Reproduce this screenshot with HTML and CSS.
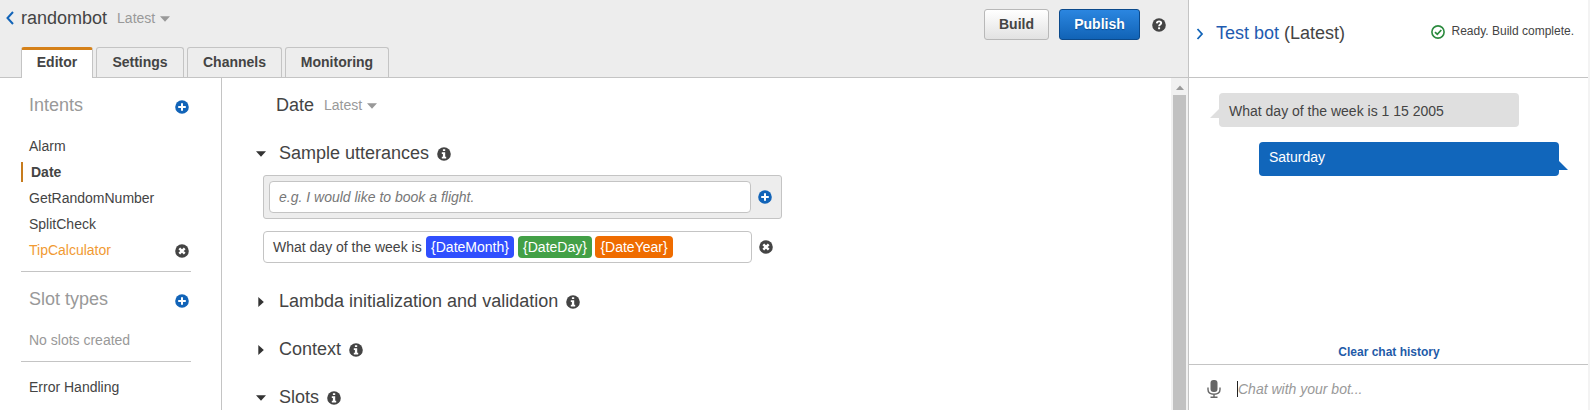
FILE: index.html
```html
<!DOCTYPE html>
<html lang="en">
<head>
<meta charset="utf-8">
<title>randombot</title>
<link rel="stylesheet" href="styles.css">
</head>
<body>
<svg class="defs" aria-hidden="true">
  <symbol id="plus" viewBox="0 0 14 14"><circle cx="7" cy="7" r="6.8" fill="#1264b8"/><path d="M7 3.2v7.6M3.2 7h7.6" stroke="#fff" stroke-width="2"/></symbol>
  <symbol id="remove" viewBox="0 0 14 14"><circle cx="7" cy="7" r="6.8" fill="#444"/><path d="M4.3 4.3l5.4 5.400M9.700 4.300l-5.400 5.400" stroke="#fff" stroke-width="2.400"/></symbol>
  <symbol id="info" viewBox="0 0 14 14"><circle cx="7" cy="7" r="6.8" fill="#444"/><path d="M5.9 2.2h2.3v1.9H5.9zM4.8 5.3h3.4v4.5h1v1.6H4.8V9.8h1.1V6.9H4.8z" fill="#fff"/></symbol>
  <symbol id="help" viewBox="0 0 14 14"><circle cx="7" cy="7" r="6.8" fill="#444"/><path d="M4.8 5.3C5 3.9 5.900 3.400 7.100 3.400c1.300 0 2.100.7 2.100 1.700 0 1.500-2.100 1.500-2.100 3.100" fill="none" stroke="#fff" stroke-width="1.900"/><path d="M6.100 9.300h2v1.900h-2z" fill="#fff"/></symbol>
  <symbol id="down" viewBox="0 0 10 6"><path d="M0 .3h10L5 5.800z" fill="currentColor"/></symbol>
  <symbol id="right" viewBox="0 0 6 10"><path d="M.3 0v10L5.800 5z" fill="currentColor"/></symbol>
</svg>
<div class="app">
  <main class="editor">
    <header class="top">
      <div class="bar">
        <div class="botname">
          <svg class="back" viewBox="0 0 8 14"><path d="M7 1L1.500 7 7 13" fill="none" stroke="#1264b8" stroke-width="2"/></svg>
          <h1 class="title">randombot</h1>
          <span class="version">Latest</span>
          <svg class="caret"><use href="#down"/></svg>
        </div>
        <div class="actions">
          <button class="btn build">Build</button>
          <button class="btn publish">Publish</button>
          <svg class="icon"><use href="#help"/></svg>
        </div>
      </div>
      <nav class="tabs">
        <a class="tab active">Editor</a>
        <a class="tab settings">Settings</a>
        <a class="tab channels">Channels</a>
        <a class="tab monitoring">Monitoring</a>
      </nav>
    </header>
    <div class="workspace">
      <aside class="sidebar">
        <section class="group intents">
          <div class="grouphead"><h2 class="title">Intents</h2><svg class="icon"><use href="#plus"/></svg></div>
          <ul class="list">
            <li class="item">Alarm</li>
            <li class="item selected">Date</li>
            <li class="item">GetRandomNumber</li>
            <li class="item">SplitCheck</li>
            <li class="item changed"><span>TipCalculator</span><svg class="icon"><use href="#remove"/></svg></li>
          </ul>
        </section>
        <section class="group slottypes">
          <div class="grouphead"><h2 class="title">Slot types</h2><svg class="icon"><use href="#plus"/></svg></div>
          <p class="empty">No slots created</p>
        </section>
        <div class="errors">Error Handling</div>
      </aside>
      <section class="content">
        <div class="intentname">
          <h2 class="title">Date</h2><span class="version">Latest</span><svg class="caret"><use href="#down"/></svg>
        </div>
        <div class="section"><svg class="arrow open"><use href="#down"/></svg><h3 class="title">Sample utterances</h3><svg class="icon"><use href="#info"/></svg></div>
        <div class="utterances">
          <div class="newutterance"><div class="field hint">e.g. I would like to book a flight.</div><svg class="icon"><use href="#plus"/></svg></div>
          <div class="utterance">
            <div class="field"><span class="words">What day of the week is</span><span class="slot month">{DateMonth}</span><span class="slot day">{DateDay}</span><span class="slot year">{DateYear}</span></div>
            <svg class="icon"><use href="#remove"/></svg>
          </div>
        </div>
        <div class="section"><svg class="arrow closed"><use href="#right"/></svg><h3 class="title">Lambda initialization and validation</h3><svg class="icon"><use href="#info"/></svg></div>
        <div class="section"><svg class="arrow closed"><use href="#right"/></svg><h3 class="title">Context</h3><svg class="icon"><use href="#info"/></svg></div>
        <div class="section"><svg class="arrow open"><use href="#down"/></svg><h3 class="title">Slots</h3><svg class="icon"><use href="#info"/></svg></div>
      </section>
      <div class="scrollbar"><svg class="up" viewBox="0 0 8 5"><path d="M0 5h8L4 .5z" fill="#999"/></svg><div class="thumb"></div></div>
    </div>
  </main>
  <aside class="test">
    <header class="testhead">
      <svg class="expand" viewBox="0 0 8 12"><path d="M1.500 1L6 6l-4.500 5" fill="none" stroke="#1264b8" stroke-width="1.800"/></svg>
      <h2 class="title"><span class="link">Test bot</span> (Latest)</h2>
      <div class="status"><svg class="icon" viewBox="0 0 14 14"><circle cx="7" cy="7" r="6.100" fill="none" stroke="#2b8a3e" stroke-width="1.600"/><path d="M4 7.200l2.300 2.200L10.300 5" fill="none" stroke="#2b8a3e" stroke-width="1.700"/></svg>Ready. Build complete.</div>
    </header>
    <div class="chat">
      <div class="bubble user">What day of the week is 1 15 2005</div>
      <div class="bubble bot">Saturday</div>
      <a class="clear">Clear chat history</a>
    </div>
    <div class="compose">
      <svg class="mic" viewBox="0 0 14 18"><rect x="3.500" y="0" width="7" height="12" rx="3" fill="#666"/><path d="M1 7.500v2c0 3 2 4.700 6 4.700s6-1.700 6-4.700v-2M7 14v3M3.500 17.200h7" fill="none" stroke="#666" stroke-width="1.400"/></svg>
      <div class="message">Chat with your bot...</div>
    </div>
  </aside>
</div>
</body>
</html>
```
FILE: styles.css
```css
* { box-sizing: border-box; }
body { margin: 0; font: 14px/20px "Liberation Sans", Arial, sans-serif; color: #444; background: #f3f3f3; }
h1, h2, h3, p, ul { margin: 0; padding: 0; font-weight: normal; }
.defs { position: absolute; width: 0; height: 0; }
.app { display: flex; width: 1588px; height: 410px; overflow: hidden; background: #fff; }
.title { font-size: 18px; line-height: 24px; white-space: nowrap; }
.icon { width: 14px; height: 14px; flex: none; }
.version { color: #999; white-space: nowrap; }
.caret { width: 10px; height: 6px; color: #999; }

.editor { width: 1188px; display: flex; flex-direction: column; flex: none; }
.top { height: 78px; background: #ededed; border-bottom: 1px solid #c4c4c4; display: flex; flex-direction: column; flex: none; }
.bar { height: 47px; display: flex; justify-content: space-between; align-items: flex-start; flex: none; }
.botname { display: flex; align-items: center; padding: 6px 0 0 6px; }
.botname .title { margin: 0 10px 0 7px; }
.back { width: 8px; height: 14px; }
.botname .caret, .intentname .caret { margin: 2px 0 0 5px; }
.actions { display: flex; align-items: center; padding: 9px 22px 0 0; }
.btn { height: 31px; padding: 0; border-radius: 3px; font: bold 14px/28px "Liberation Sans", Arial, sans-serif; }
.actions .icon { margin: 1px 0 0 12px; }
.build { width: 65px; margin-right: 10px; color: #444; background: linear-gradient(#fff, #e2e2e2); border: 1px solid #b8b8b8; }
.publish { width: 81px; color: #fff; background: linear-gradient(#2b86e0, #1163b6); border: 1px solid #0b4a8c; text-shadow: 0 1px 1px #0b4a8c; }
.btn { padding-bottom: 2px; }
.tabs { display: flex; gap: 3px; padding-left: 21px; height: 31px; }
.tab { height: 30px; border: 1px solid #c4c4c4; border-bottom: 0; border-radius: 3px 3px 0 0; font-weight: bold; line-height: 28px; text-align: center; }
.active { width: 72px; height: 31px; background: #fff; border-top: 3px solid #d5811a; line-height: 24px; }
.settings { width: 88px; }
.channels { width: 95px; }
.monitoring { width: 104px; }

.workspace { display: flex; flex: 1; min-height: 0; overflow: hidden; }
.sidebar { width: 222px; flex: none; padding: 15px 30px 0 21px; border-right: 1px solid #c4c4c4; }
.group { border-bottom: 1px solid #c4c4c4; }
.grouphead { display: flex; justify-content: space-between; align-items: center; height: 24px; padding: 0 2px 0 8px; color: #999; }
.grouphead .icon { margin-top: 4px; }
.list { list-style: none; padding-top: 16px; }
.item { display: flex; align-items: center; justify-content: space-between; height: 26px; padding: 0 2px 0 8px; }
.item .icon { margin-top: 2px; }
.selected { height: 20px; margin: 3px 0; border-left: 2px solid #c77c1e; font-weight: bold; }
.changed { color: #f19a33; }
.intents { height: 179px; }
.slottypes { height: 90px; padding-top: 15px; }
.empty { padding: 19px 0 0 8px; color: #999; }
.errors { padding: 15px 0 0 8px; }

.content { flex: 1; padding: 15px 0 0 34px; }
.intentname { display: flex; align-items: center; height: 24px; padding-left: 20px; }
.intentname .title { margin-right: 10px; }
.section { display: flex; align-items: center; height: 24px; margin-top: 24px; }
.section .icon { margin: 2px 0 0 8px; }
.arrow { color: #333; margin-top: 2px; }
.open { width: 10px; height: 6px; margin-right: 13px; }
.closed { width: 6px; height: 10px; margin: 2px 15px 0 2px; }
.utterances { padding: 10px 0 2px 7px; }
.newutterance { display: flex; align-items: center; width: 519px; height: 44px; padding-left: 5px; background: #ededed; border: 1px solid #c4c4c4; border-radius: 3px; }
.field { display: flex; align-items: center; width: 489px; height: 32px; padding: 0 9px; background: #fff; border: 1px solid #c4c4c4; border-radius: 4px; }
.hint { width: 482px; font-style: italic; color: #777; }
.newutterance .icon { margin-left: 7px; }
.utterance { display: flex; align-items: center; margin-top: 12px; }
.utterance .icon { margin-left: 7px; }
.words { width: 153px; white-space: nowrap; }
.slot { height: 22px; border-radius: 4px; color: #fff; line-height: 22px; text-align: center; }
.month { width: 88px; background: #304ffe; }
.day { width: 74px; margin: 0 3px 0 4px; background: #43a047; }
.year { width: 78px; background: #ef6c00; }
.scrollbar { width: 17px; background: #f1f1f1; display: flex; flex-direction: column; align-items: center; padding-top: 7px; }
.up { width: 8px; height: 5px; flex: none; }
.thumb { width: 13px; flex: 1; margin-top: 5px; background: #c1c1c1; }

.test { width: 400px; flex: none; display: flex; flex-direction: column; border-left: 1px solid #c4c4c4; }
.testhead { display: flex; align-items: flex-start; height: 78px; padding: 21px 14px 0 7px; border-bottom: 1px solid #c4c4c4; }
.expand { width: 8px; height: 12px; margin: 7px 12px 0 0; }
.link { color: #1f5bb0; }
.status { display: flex; align-items: center; margin-left: auto; font-size: 12px; white-space: nowrap; }
.status .icon { margin-right: 6px; margin-top: 1px; }
.chat { display: flex; flex-direction: column; flex: 1; padding: 15px 29px 2px 30px; }
.bubble { position: relative; width: 300px; height: 34px; padding: 8px 10px; border-radius: 4px; }
.bubble::after { content: ""; position: absolute; }
.user { background: #dfdfdf; }
.user::after { left: -9px; top: 16px; border-left: 9px solid transparent; border-bottom: 9px solid #dfdfdf; }
.bot { align-self: flex-end; margin-top: 15px; padding-top: 5px; color: #fff; background: #1166bb; }
.bot::after { right: -9px; top: 19px; border-right: 9px solid transparent; border-bottom: 9px solid #1166bb; }
.clear { margin: auto 0 0; align-self: center; font-size: 12px; font-weight: bold; color: #1f5ba8; }
.compose { display: flex; align-items: center; height: 46px; padding: 2px 18px 0; border-top: 1px solid #c4c4c4; }
.mic { width: 14px; height: 18px; }
.message { height: 16px; margin-left: 16px; border-left: 1px solid #222; line-height: 16px; font-style: italic; color: #999; }
```
